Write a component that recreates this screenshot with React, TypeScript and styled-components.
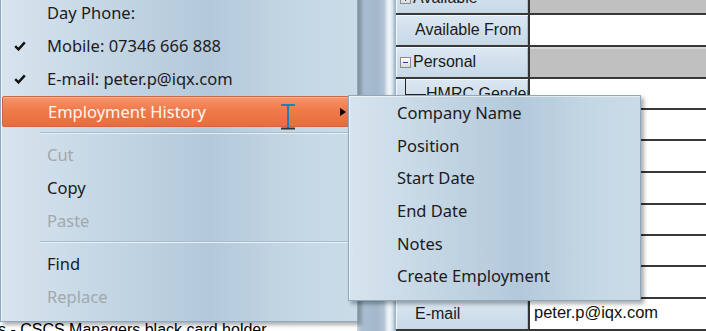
import React from "react";
import styled, { createGlobalStyle } from "styled-components";

const GlobalStyle = createGlobalStyle`
  html, body { margin: 0; padding: 0; overflow: hidden; background: #ffffff; }
  #root { width: 706px; height: 331px; }
`;

const Screen = styled.div`
  position: relative;
  width: 706px;
  height: 331px;
  overflow: hidden;
  display: flex;
  background: #ffffff;
  font-family: "Liberation Sans", Arial, sans-serif;
`;

const LeftPane = styled.div`
  width: 357px;
  flex: none;
  display: flex;
  flex-direction: column;
  justify-content: flex-end;
  overflow: hidden;
`;

const StatusLine = styled.div`
  font-size: 16px;
  line-height: 18px;
  color: #000;
  white-space: nowrap;
  margin: 0 0 -8px -2px;
`;

const Splitter = styled.div`
  width: 39px;
  flex: none;
  background: linear-gradient(
    to right,
    #c9d8e4 0px,
    #a9bfd1 4px,
    #a3b9cb 20px,
    #b0c4d4 27px,
    #d2dfe9 29px,
    #f2f6f9 32px,
    #dfe9f1 35px,
    #9fb6c9 38px,
    #9fb6c9 39px
  );
`;

const Grid = styled.div`
  flex: 1;
  display: flex;
  flex-direction: column;
  margin-top: -17px;
`;

const GridRow = styled.div<{ $h: number }>`
  display: flex;
  flex: none;
  height: ${(p) => p.$h}px;
  box-sizing: border-box;
  border-bottom: 2px solid #383838;
`;

const LabelCell = styled.div`
  width: 134px;
  flex: none;
  box-sizing: border-box;
  display: flex;
  align-items: center;
  padding-left: 4px;
  background: linear-gradient(#dce8f2, #c7d8e7);
  box-shadow: inset 1px 1px 0 #f3f8fc, inset -1px 0 0 #a9bfd2;
  border-right: 2px solid #333;
  font-size: 16px;
  color: #1a1a1a;
  white-space: nowrap;
  overflow: hidden;
`;

const LabelText = styled.span<{ $indent: number }>`
  padding-left: ${(p) => p.$indent}px;
`;

const ValueCell = styled.div<{ $group?: boolean }>`
  flex: 1;
  display: flex;
  align-items: center;
  padding: 0 0 4px 4px;
  background: ${(p) => (p.$group ? "#c0c0c0" : "#ffffff")};
  box-shadow: ${(p) => (p.$group ? "inset 0 2px 0 #d6d6d6" : "none")};
  font-size: 16.5px;
  color: #111;
  white-space: nowrap;
  overflow: hidden;
`;

const Expander = styled.span<{ $open: boolean }>`
  position: relative;
  width: 9px;
  height: 9px;
  flex: none;
  margin-right: 2px;
  border: 1px solid #8c8c8c;
  background: linear-gradient(#ffffff, #d9d9d9);
  &::before {
    content: "";
    position: absolute;
    left: 2px;
    right: 2px;
    top: 4px;
    height: 1px;
    background: #2a3f8f;
  }
  &::after {
    content: "";
    display: ${(p) => (p.$open ? "none" : "block")};
    position: absolute;
    top: 2px;
    bottom: 2px;
    left: 4px;
    width: 1px;
    background: #2a3f8f;
  }
`;

const TreeConnector = styled.span`
  position: relative;
  align-self: stretch;
  width: 24px;
  flex: none;
  margin-left: 2px;
  &::before {
    content: "";
    position: absolute;
    left: 3px;
    top: 0;
    bottom: 0;
    width: 1px;
    background: #222;
  }
  &::after {
    content: "";
    position: absolute;
    left: 3px;
    right: 0;
    top: 50%;
    height: 1px;
    background: #222;
  }
`;

const Menu = styled.div<{ $left: number; $top: number; $width: number; $padTop: number; $padBottom: number }>`
  position: absolute;
  left: ${(p) => p.$left}px;
  top: ${(p) => p.$top}px;
  width: ${(p) => p.$width}px;
  box-sizing: border-box;
  padding: ${(p) => p.$padTop}px 1px ${(p) => p.$padBottom}px 1px;
  border: 1px solid #8ea8bd;
  background: linear-gradient(to right, #d7e4ee 0%, #c4d6e4 30%, #b3c9da 58%, #c5d8e5 85%, #cadbe7 100%);
  box-shadow: 3px 3px 4px rgba(0, 0, 0, 0.32), inset 1px 1px 0 rgba(255, 255, 255, 0.55);
  font-family: "Noto Sans", "Open Sans", sans-serif;
  font-size: 16.5px;
  display: flex;
  flex-direction: column;
`;

const MenuItem = styled.div<{ $h: number; $pad: number; $disabled?: boolean; $active?: boolean }>`
  display: grid;
  grid-template-columns: ${(p) => p.$pad}px 1fr auto;
  align-items: center;
  height: ${(p) => p.$h}px;
  flex: none;
  box-sizing: border-box;
  white-space: nowrap;
  color: ${(p) => (p.$disabled ? "#a2a8ad" : p.$active ? "#fff6f0" : "#1d1a22")};
  ${(p) =>
    p.$active
      ? `
    margin: 1px 0;
    height: ${p.$h - 2}px;
    border: 1px solid #d3663e;
    border-radius: 2px;
    background: linear-gradient(#f8946a, #f07a4b 45%, #e96c3e 100%);
    box-shadow: inset 0 1px 0 rgba(255, 220, 200, 0.45);
  `
      : ""}
`;

const CheckSlot = styled.span`
  display: flex;
  align-items: center;
  padding-left: 12px;
`;

const SubArrow = styled.span`
  width: 0;
  height: 0;
  margin-right: 9px;
  border-left: 6px solid #000;
  border-top: 4px solid transparent;
  border-bottom: 4px solid transparent;
`;

const Separator = styled.div`
  height: 10px;
  flex: none;
  padding: 4px 0 0 38px;
  box-sizing: border-box;
  &::before {
    content: "";
    display: block;
    height: 1px;
    background: #a4bdd1;
    box-shadow: 0 1px 0 #e8f0f6;
  }
`;

const CursorMark = styled.svg`
  position: absolute;
  left: 281px;
  top: 104px;
`;

const Check = () => (
  <svg width="12" height="10" viewBox="0 0 12 10">
    <path d="M1.2 5.2 L4.5 8.4 L10.8 1.4" fill="none" stroke="#111" strokeWidth="2.4" strokeLinejoin="miter" />
  </svg>
);

type Row = {
  label: string;
  h: number;
  value?: string;
  group?: "open" | "closed";
  child?: boolean;
  indent?: number;
};

const rows: Row[] = [
  { label: "Available", h: 32, group: "closed" },
  { label: "Available From", h: 32, indent: 15 },
  { label: "Personal", h: 32, group: "open" },
  { label: "HMRC Gender", h: 31, child: true },
  { label: "Title", h: 31, child: true, value: "Mr" },
  { label: "First Name", h: 32, child: true, value: "Peter" },
  { label: "Surname", h: 32, child: true, value: "Parker" },
  { label: "Date of Birth", h: 31, child: true },
  { label: "NI Number", h: 31, child: true },
  { label: "Experience", h: 32, child: true, value: "Yes - 12 Years" },
  { label: "E-mail", h: 32, indent: 15, value: "peter.p@iqx.com" },
  { label: "Mobile", h: 32, indent: 15, value: "07346 666 888" },
];

type Item =
  | { kind: "sep" }
  | { kind: "item"; text: string; checked?: boolean; disabled?: boolean; active?: boolean; sub?: boolean };

const mainItems: Item[] = [
  { kind: "item", text: "Day Phone:" },
  { kind: "item", text: "Mobile: 07346 666 888", checked: true },
  { kind: "item", text: "E-mail: peter.p@iqx.com", checked: true },
  { kind: "item", text: "Employment History", active: true, sub: true },
  { kind: "sep" },
  { kind: "item", text: "Cut", disabled: true },
  { kind: "item", text: "Copy" },
  { kind: "item", text: "Paste", disabled: true },
  { kind: "sep" },
  { kind: "item", text: "Find" },
  { kind: "item", text: "Replace", disabled: true },
];

const subItems = ["Company Name", "Position", "Start Date", "End Date", "Notes", "Create Employment"];

export default function App() {
  return (
    <>
      <GlobalStyle />
      <Screen>
        <LeftPane>
          <StatusLine>s - CSCS Managers black card holder</StatusLine>
        </LeftPane>
        <Splitter />
        <Grid>
          {rows.map((r) => (
            <GridRow key={r.label} $h={r.h}>
              <LabelCell>
                {r.group && <Expander $open={r.group === "open"} />}
                {r.child && <TreeConnector />}
                <LabelText $indent={r.indent ?? 0}>{r.label}</LabelText>
              </LabelCell>
              <ValueCell $group={!!r.group}>{r.value}</ValueCell>
            </GridRow>
          ))}
        </Grid>

        <Menu $left={0} $top={-8} $width={358} $padTop={3} $padBottom={8}>
          {mainItems.map((it, i) =>
            it.kind === "sep" ? (
              <Separator key={i} />
            ) : (
              <MenuItem key={i} $h={33} $pad={45} $disabled={it.disabled} $active={it.active}>
                <CheckSlot>{it.checked && <Check />}</CheckSlot>
                <span>{it.text}</span>
                {it.sub ? <SubArrow /> : <span />}
              </MenuItem>
            )
          )}
        </Menu>

        <CursorMark width="15" height="27" viewBox="0 0 15 27">
          <rect x="0" y="0" width="14" height="2" fill="#1a80c2" />
          <rect x="6" y="1" width="2" height="23" fill="#1a80c2" />
          <rect x="0" y="23.5" width="14" height="2" fill="#333" />
        </CursorMark>

        <Menu $left={348} $top={95} $width={293} $padTop={0} $padBottom={8}>
          {subItems.map((t) => (
            <MenuItem key={t} $h={32.7} $pad={47}>
              <span />
              <span>{t}</span>
              <span />
            </MenuItem>
          ))}
        </Menu>
      </Screen>
    </>
  );
}
